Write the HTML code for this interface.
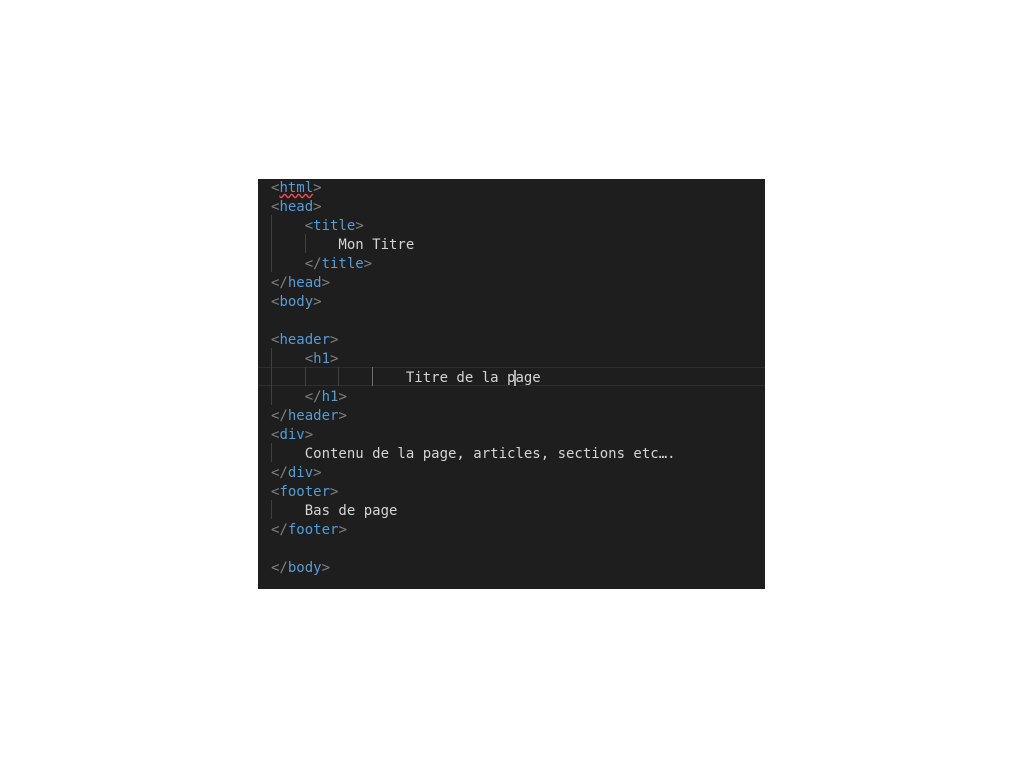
<!DOCTYPE html>
<html><head><style>
body{margin:0;background:#fff;width:1024px;height:768px;position:relative;overflow:hidden}
#ed{position:absolute;left:258px;top:179px;width:507px;height:410px;background:#1e1e1e;overflow:hidden}
.l{position:absolute;left:13px;height:19px;line-height:19px;padding-top:2px;font-family:"DejaVu Sans Mono","Liberation Mono",monospace;font-size:14px;color:#d4d4d4;white-space:pre}
.b{color:#808080}.t{color:#569cd6}
.g{position:absolute;width:1px;background:#404040}
#cur{position:absolute;left:0;top:188px;width:507px;height:17px;border-top:1px solid #2e2e2e;border-bottom:1px solid #2e2e2e}
</style></head><body><div id="ed">
<div id="cur"></div>
<div class="g" style="left:13px;top:36px;height:57px"></div>
<div class="g" style="left:47px;top:55px;height:19px"></div>
<div class="g" style="left:13px;top:169px;height:57px"></div>
<div class="g" style="left:47px;top:188px;height:19px"></div>
<div class="g" style="left:80px;top:188px;height:19px"></div>
<div class="g" style="left:114px;top:188px;height:19px;background:#707070"></div>
<div class="g" style="left:13px;top:264px;height:19px"></div>
<div class="g" style="left:13px;top:321px;height:19px"></div>
<div class="l" style="top:-2px"><span class="b">&lt;</span><span class="t" style="text-decoration:underline wavy #f14c4c">html</span><span class="b">&gt;</span></div>
<div class="l" style="top:17px"><span class="b">&lt;</span><span class="t">head</span><span class="b">&gt;</span></div>
<div class="l" style="top:36px">    <span class="b">&lt;</span><span class="t">title</span><span class="b">&gt;</span></div>
<div class="l" style="top:55px">        Mon Titre</div>
<div class="l" style="top:74px">    <span class="b">&lt;/</span><span class="t">title</span><span class="b">&gt;</span></div>
<div class="l" style="top:93px"><span class="b">&lt;/</span><span class="t">head</span><span class="b">&gt;</span></div>
<div class="l" style="top:112px"><span class="b">&lt;</span><span class="t">body</span><span class="b">&gt;</span></div>
<div class="l" style="top:150px"><span class="b">&lt;</span><span class="t">header</span><span class="b">&gt;</span></div>
<div class="l" style="top:169px">    <span class="b">&lt;</span><span class="t">h1</span><span class="b">&gt;</span></div>
<div class="l" style="top:188px">                Titre de la p<span style="border-left:2px solid #aeafad;margin-left:-1px;margin-right:-1px"></span>age</div>
<div class="l" style="top:207px">    <span class="b">&lt;/</span><span class="t">h1</span><span class="b">&gt;</span></div>
<div class="l" style="top:226px"><span class="b">&lt;/</span><span class="t">header</span><span class="b">&gt;</span></div>
<div class="l" style="top:245px"><span class="b">&lt;</span><span class="t">div</span><span class="b">&gt;</span></div>
<div class="l" style="top:264px">    Contenu de la page, articles, sections etc….</div>
<div class="l" style="top:283px"><span class="b">&lt;/</span><span class="t">div</span><span class="b">&gt;</span></div>
<div class="l" style="top:302px"><span class="b">&lt;</span><span class="t">footer</span><span class="b">&gt;</span></div>
<div class="l" style="top:321px">    Bas de page</div>
<div class="l" style="top:340px"><span class="b">&lt;/</span><span class="t">footer</span><span class="b">&gt;</span></div>
<div class="l" style="top:378px"><span class="b">&lt;/</span><span class="t">body</span><span class="b">&gt;</span></div>
</div></body></html>
